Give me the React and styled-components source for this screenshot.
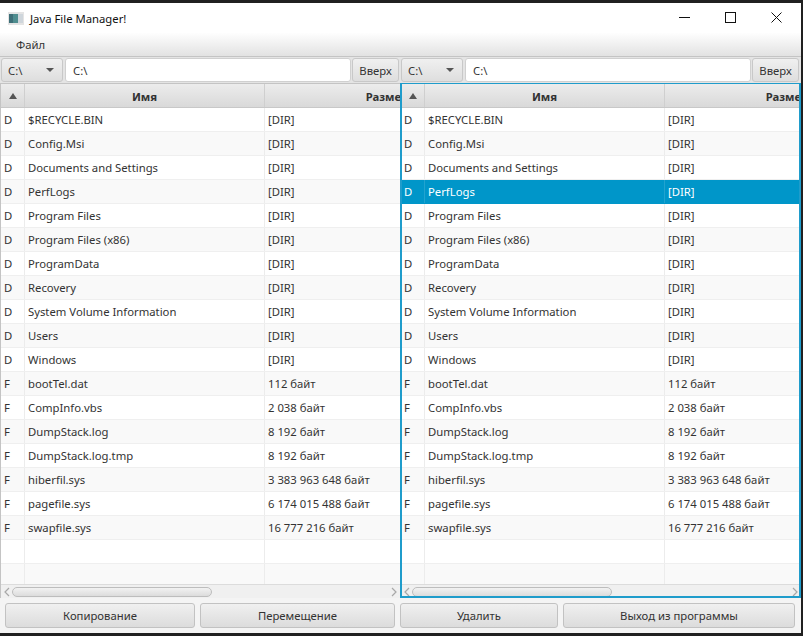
import React from 'react';
import styled, { createGlobalStyle } from 'styled-components';

const GlobalStyle = createGlobalStyle`
  html, body {
    margin: 0;
    padding: 0;
    height: 100%;
    background: #1c1c1c;
    overflow: hidden;
  }
  * { box-sizing: border-box; }
`;

const Screen = styled.div`
  width: 803px;
  height: 636px;
  padding: 3px 2px 3px 0;
  background: #202020;
`;
const Window = styled.div`
  width: 801px;
  height: 630px;
  display: flex;
  flex-direction: column;
  background: #f4f4f4;
  font-family: "Noto Sans", "Open Sans", sans-serif;
  font-size: 11.3px;
  color: #333;
`;
const TitleBar = styled.div`
  height: 30px;
  flex: none;
  display: flex;
  align-items: center;
  background: #fff;
  padding: 0 2px 0 8px;
  color: #111;
`;
const TitleText = styled.span`
  margin-left: 6px;
  flex: 1;
`;
const WindowButton = styled.div`
  width: 46px;
  height: 30px;
  padding-bottom: 2px;
  display: flex;
  align-items: center;
  justify-content: center;
`;
const MenuBar = styled.div`
  height: 24px;
  flex: none;
  display: flex;
  align-items: center;
  padding-left: 16px;
  background: linear-gradient(#fefefe, #e2e2e2);
  border-bottom: 1px solid #c4c4c4;
`;
const Panes = styled.div`
  display: grid;
  grid-template-columns: 400px 401px;
  grid-template-rows: minmax(0, 1fr);
  height: 541px;
  flex: none;
`;
const Pane = styled.div`
  display: flex;
  flex-direction: column;
  min-width: 0;
  min-height: 0;
`;
const Toolbar = styled.div`
  height: 26px;
  flex: none;
  display: flex;
  align-items: center;
  gap: 1px;
  padding: 0 ${(p) => p.$right}px 0 1px;
  background: #e4e4e4;
`;
const Combo = styled.div`
  width: 62px;
  height: 24px;
  flex: none;
  display: flex;
  align-items: center;
  justify-content: space-between;
  padding: 0 8px 0 6px;
  border: 1px solid #c8c8c8;
  border-radius: 3px;
  background: linear-gradient(#f0f0f0, #dedede);
`;
const ComboArrow = styled.span`
  width: 0;
  height: 0;
  border-left: 4px solid transparent;
  border-right: 4px solid transparent;
  border-top: 4px solid #555;
`;
const PathField = styled.div`
  flex: 1;
  height: 24px;
  margin-left: 1px;
  display: flex;
  align-items: center;
  padding-left: 7px;
  background: #fff;
  border: 1px solid #d0d0d0;
  border-radius: 3px;
`;
const UpButton = styled.div`
  width: 47px;
  height: 24px;
  flex: none;
  display: flex;
  align-items: center;
  justify-content: center;
  border: 1px solid #c8c8c8;
  border-radius: 3px;
  background: linear-gradient(#f0f0f0, #dedede);
`;
const Table = styled.div`
  position: relative;
  flex: 1;
  min-height: 0;
  display: flex;
  flex-direction: column;
  overflow: hidden;
  background: #fff;
  border-top: 1px solid ${(p) => (p.$focused ? '#1f9ccb' : '#c4c4c4')};
  border-left: 1px solid ${(p) => (p.$focused ? '#1f9ccb' : '#c4c4c4')};

  /* focus ring lies over the cells */
  &::after {
    content: '';
    display: ${(p) => (p.$focused ? 'block' : 'none')};
    position: absolute;
    inset: 0;
    border: solid #1f9ccb;
    border-width: 0 2px 2px 1px;
    pointer-events: none;
  }
`;
const Viewport = styled.div`
  flex: 1;
  min-height: 0;
  overflow: hidden;
`;
const HeaderRow = styled.div`
  display: grid;
  grid-template-columns: 24px 240px 245px;
  height: 24px;
  width: 509px;
  background: linear-gradient(#ececec, #d9d9d9);
  border-bottom: 1px solid #c8c8c8;
`;
const HeaderCell = styled.div`
  display: flex;
  align-items: center;
  justify-content: center;
  padding-top: 1px;
  font-weight: 700;
  color: #333;
  border-right: 1px solid #cfcfcf;
  white-space: nowrap;
`;
const SortArrow = styled.span`
  width: 0;
  height: 0;
  border-left: 4.5px solid transparent;
  border-right: 4.5px solid transparent;
  border-bottom: 6px solid #555;
`;
const Row = styled.div`
  display: grid;
  grid-template-columns: 24px 240px 245px;
  width: 509px;
  height: 24px;
  background: ${(p) => (p.$selected ? '#0096c9' : p.$odd ? '#f9f9f9' : '#fff')};
  color: ${(p) => (p.$selected ? '#fff' : '#333')};
  border-bottom: 1px solid ${(p) => (p.$selected ? '#0096c9' : '#efefef')};
`;
const Cell = styled.div`
  display: flex;
  align-items: center;
  padding-left: 3px;
  white-space: nowrap;
  border-right: 1px solid ${(p) => (p.$selected ? '#22a3cf' : '#ececec')};
`;
const ScrollBar = styled.div`
  height: 14px;
  flex: none;
  display: flex;
  align-items: center;
  justify-content: space-between;
  background: #f0f0f0;
  border-top: 1px solid #dcdcdc;
  position: relative;
  padding: 0 3px;
`;
const ScrollThumb = styled.div`
  position: absolute;
  left: 11px;
  top: 2px;
  width: 200px;
  height: 10px;
  border: 1px solid #bdbdbd;
  border-radius: 5px;
  background: linear-gradient(#f2f2f2, #dcdcdc);
`;
const ButtonBar = styled.div`
  flex: 1;
  display: grid;
  grid-template-columns: 190px 195px 158px 232px;
  column-gap: 5px;
  padding: 5px 0 0 5px;
  background: #f4f4f4;
`;
const ActionButton = styled.div`
  height: 25px;
  display: flex;
  align-items: center;
  justify-content: center;
  border: 1px solid #c2c2c2;
  border-radius: 3px;
  background: linear-gradient(#f0f0f0, #dcdcdc);
`;

const rows = [
  ['D', '$RECYCLE.BIN', '[DIR]'],
  ['D', 'Config.Msi', '[DIR]'],
  ['D', 'Documents and Settings', '[DIR]'],
  ['D', 'PerfLogs', '[DIR]'],
  ['D', 'Program Files', '[DIR]'],
  ['D', 'Program Files (x86)', '[DIR]'],
  ['D', 'ProgramData', '[DIR]'],
  ['D', 'Recovery', '[DIR]'],
  ['D', 'System Volume Information', '[DIR]'],
  ['D', 'Users', '[DIR]'],
  ['D', 'Windows', '[DIR]'],
  ['F', 'bootTel.dat', '112 байт'],
  ['F', 'CompInfo.vbs', '2 038 байт'],
  ['F', 'DumpStack.log', '8 192 байт'],
  ['F', 'DumpStack.log.tmp', '8 192 байт'],
  ['F', 'hiberfil.sys', '3 383 963 648 байт'],
  ['F', 'pagefile.sys', '6 174 015 488 байт'],
  ['F', 'swapfile.sys', '16 777 216 байт'],
  ['', '', ''],
  ['', '', ''],
];

const Chevron = ({ left }) => (
  <svg width="6" height="10" viewBox="0 0 6 10">
    <path d={left ? 'M5 1 L1 5 L5 9' : 'M1 1 L5 5 L1 9'} fill="none" stroke="#a8a8a8" strokeWidth="1.2" />
  </svg>
);

const AppIcon = () => (
  <svg width="16" height="13" viewBox="0 0 16 13">
    <rect x="0" y="0" width="16" height="13" fill="#e4e4e4" />
    <rect x="1" y="2" width="9" height="9" fill="#4f8d8f" />
    <rect x="1" y="2" width="4" height="9" fill="#3d6f78" />
    <rect x="10" y="2" width="5" height="9" fill="#cfd6dc" />
  </svg>
);

const FilePane = ({ focused, selected, right }) => (
  <Pane>
    <Toolbar $right={right}>
      <Combo>C:\<ComboArrow /></Combo>
      <PathField>C:\</PathField>
      <UpButton>Вверх</UpButton>
    </Toolbar>
    <Table $focused={focused}>
      <Viewport>
        <HeaderRow>
          <HeaderCell><SortArrow /></HeaderCell>
          <HeaderCell>Имя</HeaderCell>
          <HeaderCell>Размер</HeaderCell>
        </HeaderRow>
        {rows.map((row, i) => (
          <Row key={`${row[1]}${i}`} $odd={i % 2 === 1} $selected={selected === i}>
            {row.map((text, j) => (
              <Cell key={j} $selected={selected === i}>{text}</Cell>
            ))}
          </Row>
        ))}
      </Viewport>
      <ScrollBar>
        <Chevron left />
        <ScrollThumb />
        <Chevron />
      </ScrollBar>
    </Table>
  </Pane>
);

const App = () => (
  <Screen>
    <GlobalStyle />
    <Window>
      <TitleBar>
        <AppIcon />
        <TitleText>Java File Manager!</TitleText>
        <WindowButton>
          <svg width="11" height="11" viewBox="0 0 11 11"><path d="M0 5.5H11" stroke="#111" /></svg>
        </WindowButton>
        <WindowButton>
          <svg width="11" height="11" viewBox="0 0 11 11"><rect x="0.5" y="0.5" width="10" height="10" fill="none" stroke="#111" /></svg>
        </WindowButton>
        <WindowButton>
          <svg width="11" height="11" viewBox="0 0 11 11"><path d="M0.5 0.5L10.5 10.5M10.5 0.5L0.5 10.5" stroke="#111" /></svg>
        </WindowButton>
      </TitleBar>
      <MenuBar>Файл</MenuBar>
      <Panes>
        <FilePane right={1} />
        <FilePane focused selected={3} right={2} />
      </Panes>
      <ButtonBar>
        <ActionButton>Копирование</ActionButton>
        <ActionButton>Перемещение</ActionButton>
        <ActionButton>Удалить</ActionButton>
        <ActionButton>Выход из программы</ActionButton>
      </ButtonBar>
    </Window>
  </Screen>
);

export default App;
